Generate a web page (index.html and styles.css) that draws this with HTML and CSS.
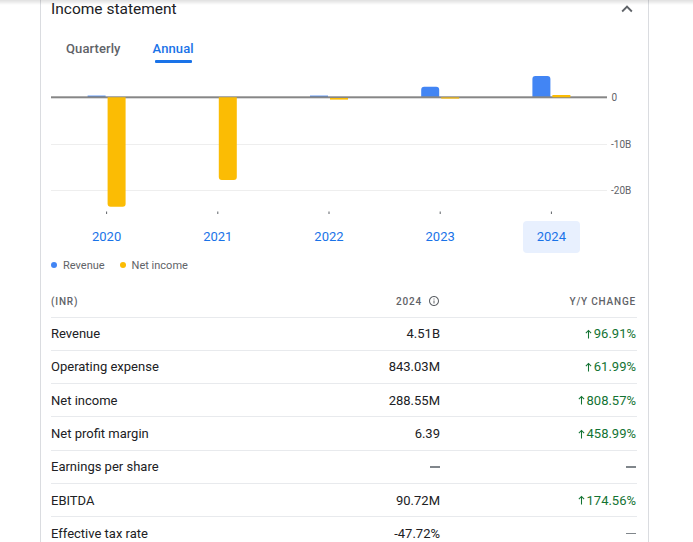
FILE: index.html
```html
<!DOCTYPE html>
<html lang="en">
<head>
<meta charset="utf-8">
<title>Income statement</title>
<link rel="stylesheet" href="styles.css">
</head>
<body>
<div class="shade"></div>
<section class="card">
  <header class="card-head">
    <h2 class="title">Income statement</h2>
    <svg class="chev" viewBox="0 0 24 24" width="22" height="22"><path d="M7.41 15.41L12 10.83l4.59 4.58L18 14l-6-6-6 6z"/></svg>
  </header>
  <nav class="tabs">
    <span class="tab">Quarterly</span>
    <span class="tab active">Annual</span>
  </nav>
  <svg class="chart" width="587" height="150" viewBox="0 0 587 150">
    <rect class="grid" x="0" y="76" width="556" height="1"/>
    <rect class="grid" x="0" y="122" width="556" height="1"/>
    <rect class="rev" x="36.6" y="27.6" width="18" height="1.4"/>
    <rect class="rev" x="259" y="27.6" width="18" height="1.4"/>
    <path class="rev" d="M370.2 29.3 V21.7 q0 -3 3 -3 h12 q3 0 3 3 V29.3 z"/>
    <path class="rev" d="M481.4 29.3 V11 q0 -3 3 -3 h12 q3 0 3 3 V29.3 z"/>
    <rect class="zero" x="0" y="28.3" width="556" height="2"/>
    <path class="net" d="M56.6 29.3 h18 V135.7 q0 3 -3 3 h-12 q-3 0 -3 -3 z"/>
    <path class="net" d="M167.8 29.3 h18 V109 q0 3 -3 3 h-12 q-3 0 -3 -3 z"/>
    <rect class="net" x="279" y="30" width="18" height="1.6"/>
    <rect class="net" x="390.2" y="29.4" width="18" height="1.2"/>
    <rect class="net" x="501.4" y="27" width="18" height="2.3"/>
    <text class="ylab" x="560.5" y="32.5">0</text>
    <text class="ylab" x="560" y="79.5">-10B</text>
    <text class="ylab" x="560" y="125.5">-20B</text>
    <rect class="tick" x="55.1" y="143.5" width="1" height="2.5"/>
    <rect class="tick" x="166.3" y="143.5" width="1" height="2.5"/>
    <rect class="tick" x="277.5" y="143.5" width="1" height="2.5"/>
    <rect class="tick" x="388.7" y="143.5" width="1" height="2.5"/>
    <rect class="tick" x="499.9" y="143.5" width="1" height="2.5"/>
  </svg>
  <div class="years">
    <div class="year"><span>2020</span></div>
    <div class="year"><span>2021</span></div>
    <div class="year"><span>2022</span></div>
    <div class="year"><span>2023</span></div>
    <div class="year"><span class="sel">2024</span></div>
  </div>
  <div class="legend">
    <span class="dot dot-rev"></span><span class="leg-text">Revenue</span>
    <span class="dot dot-net"></span><span class="leg-text">Net income</span>
  </div>
  <div class="table">
    <div class="row head">
      <span>(INR)</span>
      <span class="num">2024 <svg class="info" viewBox="0 0 24 24" width="12" height="12"><path d="M11 7h2v2h-2zm0 4h2v6h-2zm1-9C6.48 2 2 6.48 2 12s4.48 10 10 10 10-4.48 10-10S17.52 2 12 2zm0 18c-4.41 0-8-3.59-8-8s3.59-8 8-8 8 3.59 8 8-3.59 8-8 8z"/></svg></span>
      <span class="num">Y/Y change</span>
    </div>
    <div class="row">
      <span>Revenue</span><span class="num">4.51B</span>
      <span class="num up"><svg class="arrow" viewBox="0 0 12 16" width="7" height="10"><path d="M6 15.5V2M1.5 6.5L6 2l4.5 4.5"/></svg>96.91%</span>
    </div>
    <div class="row">
      <span>Operating expense</span><span class="num">843.03M</span>
      <span class="num up"><svg class="arrow" viewBox="0 0 12 16" width="7" height="10"><path d="M6 15.5V2M1.5 6.5L6 2l4.5 4.5"/></svg>61.99%</span>
    </div>
    <div class="row">
      <span>Net income</span><span class="num">288.55M</span>
      <span class="num up"><svg class="arrow" viewBox="0 0 12 16" width="7" height="10"><path d="M6 15.5V2M1.5 6.5L6 2l4.5 4.5"/></svg>808.57%</span>
    </div>
    <div class="row">
      <span>Net profit margin</span><span class="num">6.39</span>
      <span class="num up"><svg class="arrow" viewBox="0 0 12 16" width="7" height="10"><path d="M6 15.5V2M1.5 6.5L6 2l4.5 4.5"/></svg>458.99%</span>
    </div>
    <div class="row">
      <span>Earnings per share</span><span class="num"><span class="dash"></span></span>
      <span class="num"><span class="dash"></span></span>
    </div>
    <div class="row">
      <span>EBITDA</span><span class="num">90.72M</span>
      <span class="num up"><svg class="arrow" viewBox="0 0 12 16" width="7" height="10"><path d="M6 15.5V2M1.5 6.5L6 2l4.5 4.5"/></svg>174.56%</span>
    </div>
    <div class="row">
      <span>Effective tax rate</span><span class="num">-47.72%</span>
      <span class="num"><span class="dash"></span></span>
    </div>
  </div>
</section>
</body>
</html>
```
FILE: styles.css
```css
* { box-sizing: border-box; }
html, body { margin: 0; padding: 0; background: #fff; }
body {
  font-family: Roboto, "Liberation Sans", Arial, sans-serif;
  color: #202124;
  overflow: hidden;
}
.shade {
  position: fixed;
  top: 0; left: 0; right: 0;
  height: 5px;
  background: linear-gradient(rgba(0,0,0,0.12), rgba(0,0,0,0));
  z-index: 2;
}
.card {
  margin-left: 40px;
  width: 609px;
  border: 1px solid #dadce0;
  border-top: none;
  padding: 0 10px 20px 10px;
}
.card-head {
  display: flex;
  align-items: center;
  justify-content: space-between;
  height: 18px;
}
.title {
  margin: 0;
  font-size: 15.5px;
  font-weight: 400;
  line-height: 18px;
  color: #202124;
}
.chev { fill: #5f6368; }
.tabs {
  display: flex;
  gap: 32px;
  padding-left: 15px;
  margin-top: 23px;
  height: 22px;
}
.tab {
  position: relative;
  font-size: 13px;
  font-weight: 500;
  line-height: 16px;
  color: #5f6368;
  letter-spacing: 0.1px;
}
.tab.active { color: #1a73e8; }
.tab.active::after {
  content: "";
  position: absolute;
  left: 2px; right: 2px;
  top: 19px;
  height: 3px;
  background: #1a73e8;
  border-radius: 1px;
}
.chart { display: block; margin-top: 5px; }
.chart .grid { fill: #eeeeee; }
.chart .zero { fill: #868686; }
.chart .rev { fill: #4285f4; }
.chart .net { fill: #fbbc04; }
.chart .tick { fill: #5f6368; }
.chart .ylab { font-size: 10px; fill: #5f6368; font-family: Roboto, sans-serif; }
.years {
  display: grid;
  grid-template-columns: repeat(5, 111.2px);
  margin-top: 3px;
  height: 32px;
}
.year { display: flex; justify-content: center; }
.year span {
  display: block;
  padding: 8px 14px;
  line-height: 16px;
  font-size: 13px;
  color: #1a73e8;
  border-radius: 4px;
}
.year span.sel { background: #e8f0fe; }
.legend {
  display: flex;
  align-items: center;
  margin-top: 5px;
  height: 14px;
  font-size: 11px;
  color: #5f6368;
}
.dot {
  width: 6px; height: 6px;
  border-radius: 50%;
  margin-right: 6px;
}
.dot-rev { background: #4285f4; }
.dot-net { background: #fbbc04; margin-left: 15px; }
.table { margin-top: 14px; width: 586px; }
.row {
  display: grid;
  grid-template-columns: 1fr 130px 196px;
  align-items: center;
  height: 33.33px;
  border-bottom: 1px solid #e8eaed;
  font-size: 13px;
  color: #202124;
}
.row.head {
  height: 31.5px;
  font-size: 10px;
  font-weight: 500;
  letter-spacing: 0.8px;
  text-transform: uppercase;
  color: #5f6368;
}
.num {
  display: flex;
  align-items: center;
  justify-content: flex-end;
  padding-right: 1px;
}
.info { fill: #5f6368; margin-left: 6px; }
.up { color: #137333; }
.arrow {
  fill: none;
  stroke: #137333;
  stroke-width: 1.8;
  margin-right: 2px;
}
.dash {
  display: block;
  width: 10px;
  height: 1.5px;
  background: #80868b;
}
```
